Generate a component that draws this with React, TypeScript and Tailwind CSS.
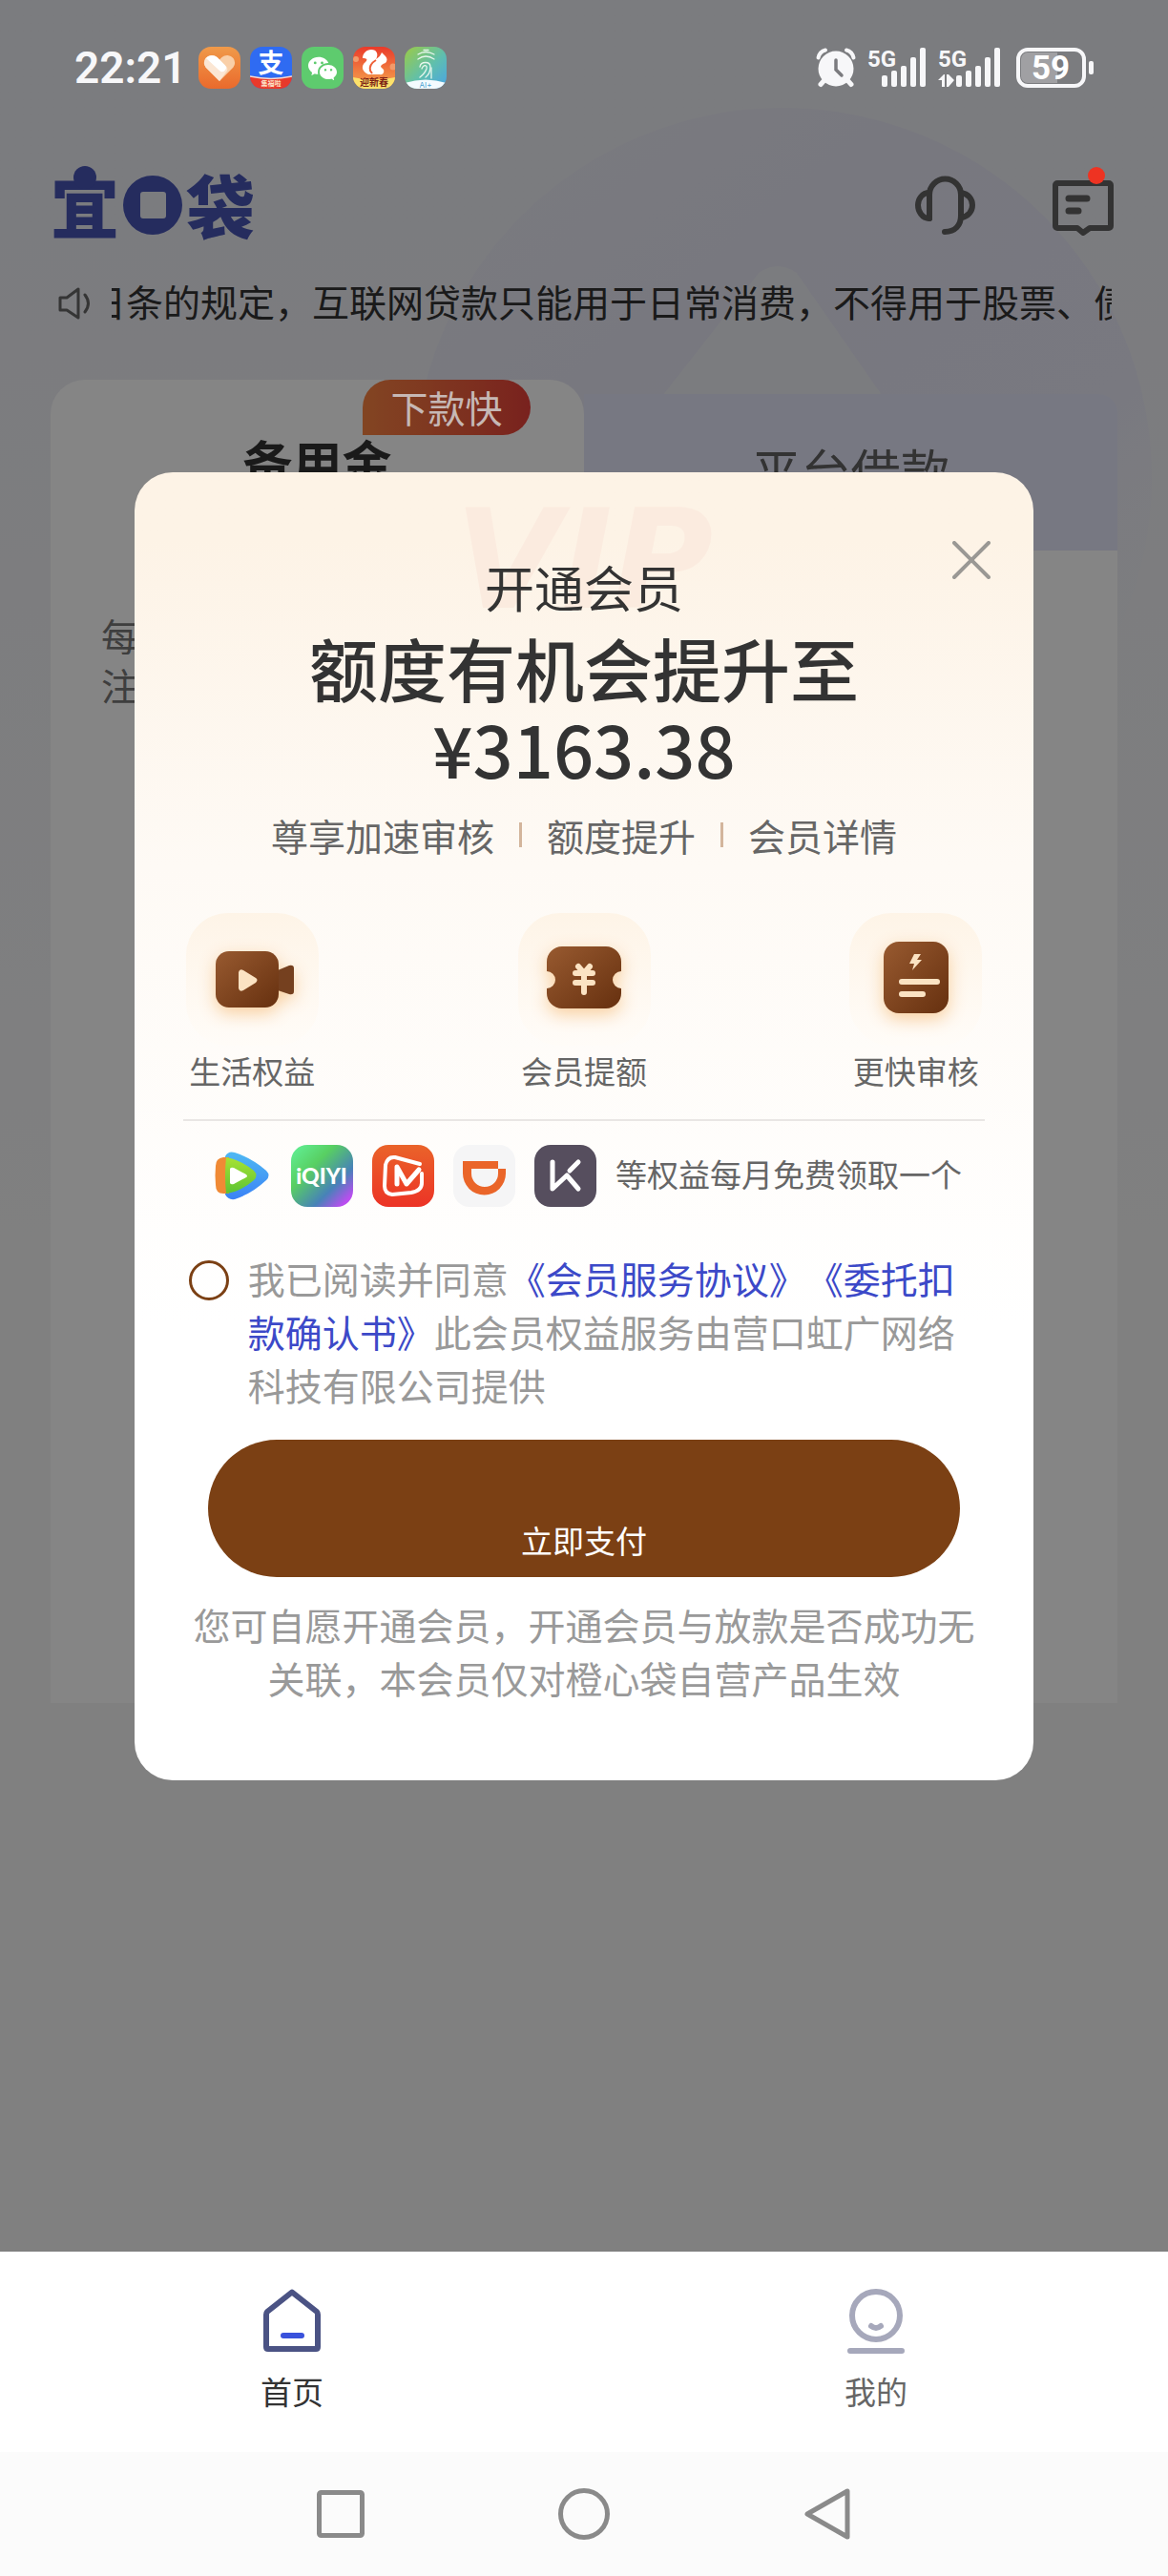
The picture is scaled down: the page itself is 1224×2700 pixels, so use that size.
import { useState } from 'react'
import type { ReactNode } from 'react'
import { BsWechat } from 'react-icons/bs'

const CJK = "'Noto Sans CJK SC', sans-serif"

function HeartApp() {
  return (
    <svg viewBox="0 0 44 44" className="size-11">
      <defs>
        <linearGradient id="heartBg" x1="0" y1="0" x2="0" y2="1">
          <stop offset="0" stopColor="#f09a4a" />
          <stop offset="1" stopColor="#ea6a2c" />
        </linearGradient>
      </defs>
      <rect width="44" height="44" rx="13" fill="url(#heartBg)" />
      <path d="M22 36 7.500 21.500a8.500 8.500 0 0 1 0-9.500 8.300 8.300 0 0 1 12-1L22 13.500l2.500-2.500a8.300 8.300 0 0 1 12 1 8.500 8.500 0 0 1 0 9.500Z" fill="#f9cfa8" />
      <path d="M22 36 7.500 21.500a8.500 8.500 0 0 1 0-9.500 8.300 8.300 0 0 1 12-1L29 20.500a4 4 0 0 1 0 6Z" fill="#fbe6d3" />
      <path d="M8 12a8.300 8.300 0 0 1 11.500-1l8 8a4 4 0 0 1-5.500 6Z" fill="#fff" />
    </svg>
  )
}

function PayApp() {
  return (
    <svg viewBox="0 0 44 44" className="size-11">
      <defs>
        <clipPath id="payClip"><rect width="44" height="44" rx="13" /></clipPath>
      </defs>
      <g clipPath="url(#payClip)">
        <rect width="44" height="44" fill="#2f6bf2" />
        <text x="22" y="27" fontSize="27" fontWeight="700" fill="#fff" textAnchor="middle" fontFamily={CJK}>支</text>
        <path d="M0 31q22 5 44 0v13H0Z" fill="#e8392b" />
        <path d="M0 31q22 5 44 0" fill="none" stroke="#fbd9cf" strokeWidth="1.500" />
        <text x="22" y="41" fontSize="7" fontWeight="700" fill="#fde3c8" textAnchor="middle" fontFamily={CJK}>集福啦</text>
      </g>
    </svg>
  )
}

function ChatApp() {
  return (
    <span className="flex size-11 items-center justify-center rounded-[13px] bg-[#5ecb6e] text-white">
      <BsWechat className="size-[30px]" />
    </span>
  )
}

function SquirrelApp() {
  return (
    <svg viewBox="0 0 44 44" className="size-11">
      <defs>
        <clipPath id="sqClip"><rect width="44" height="44" rx="13" /></clipPath>
        <linearGradient id="sqBg" x1="0" y1="0" x2="0" y2="1">
          <stop offset="0" stopColor="#ea3a2a" />
          <stop offset="0.700" stopColor="#f28a45" />
        </linearGradient>
      </defs>
      <g clipPath="url(#sqClip)">
        <rect width="44" height="44" fill="url(#sqBg)" />
        <circle cx="3" cy="13" r="3" fill="#f39a6a" />
        <circle cx="42" cy="21" r="3.500" fill="#f39a6a" />
        <path d="M16 29C9 26 8 20 13 16c3-3 1-4-3-4 0-5 4-9 9-9 6 0 8 5 5 10 3-2 5-4 6-7l4 4c2 2 2 5 0 7-3 1-5 2-5 4l3 3c1 3-1 6-4 5Z" fill="#fff" />
        <path d="M24 14c-5 3-7 7-6 11l2 3" fill="none" stroke="#ee6038" strokeWidth="2" />
        <path d="M0 32q22 5 44 0v12H0Z" fill="#fbe26b" />
        <text x="22" y="41" fontSize="10" fontWeight="700" fill="#7c1f14" textAnchor="middle" fontFamily={CJK}>迎新春</text>
      </g>
    </svg>
  )
}

function PrintApp() {
  return (
    <svg viewBox="0 0 44 44" className="size-11">
      <defs>
        <clipPath id="aiClip"><rect width="44" height="44" rx="13" /></clipPath>
        <linearGradient id="aiBg" x1="0" y1="0" x2="1" y2="1">
          <stop offset="0" stopColor="#9ccb45" />
          <stop offset="0.550" stopColor="#5fbfae" />
          <stop offset="1" stopColor="#4aa3e6" />
        </linearGradient>
      </defs>
      <g clipPath="url(#aiClip)">
        <rect width="44" height="44" fill="url(#aiBg)" />
        <g fill="none" stroke="#e6f6ec" strokeWidth="1.300" strokeLinecap="round">
          <path d="M20 3.500h5M14 8q8-5 17 0M14 13q8-6 17 0M16 21c1-6 11-6 11 0 0 4-1 8-5 11" />
          <path d="M18 23c2-5 6-4 5 0-1 3-3 6-7 9M28 22v11" />
        </g>
        <path d="M0 38q22-7 44 0v6H0Z" fill="#f4fbff" />
        <text x="22" y="43" fontSize="8" fill="#4a9fd0" textAnchor="middle" fontFamily="Inter, sans-serif">AI+</text>
      </g>
    </svg>
  )
}

function AlarmIcon() {
  return (
    <svg viewBox="0 0 42 42" className="size-[42px]">
      <g stroke="#f7f7f9" strokeLinecap="round" fill="none">
        <path d="M2.500 10.500Q4 4 10 2.500M39.500 10.500Q38 4 32 2.500" strokeWidth="4" />
        <path d="m9 34-4 4.500M33 34l4 4.500" strokeWidth="5" />
      </g>
      <circle cx="21" cy="22" r="18.500" fill="#f7f7f9" />
      <path d="M21 13v10l6 6" fill="none" stroke="#7b7b7f" strokeWidth="3.500" strokeLinecap="round" />
    </svg>
  )
}

function SignalIcon({ data }: { data?: boolean }) {
  return (
    <svg viewBox="0 0 66 42" className="h-[42px] w-[66px] overflow-visible" fill="#f7f7f9">
      <text x="0" y="20" fontSize="24" fontWeight="700" fontFamily="Roboto, sans-serif">5G</text>
      <g className={data ? 'translate-x-[4px]' : undefined}>
        <rect x="15" y="29" width="6" height="12" rx="2" />
        <rect x="25" y="24" width="6" height="17" rx="2" />
        <rect x="35" y="19" width="6" height="22" rx="2" />
        <rect x="45" y="10" width="6" height="31" rx="2" />
        <rect x="55" y="0" width="6" height="41" rx="2" />
      </g>
      {data ? <path d="M0 34 6 28h1v13H4v-7ZM9 28h2l6 6-6 7H9Z" /> : null}
    </svg>
  )
}

function BatteryIcon() {
  return (
    <svg viewBox="0 0 82 42" className="h-[42px] w-[82px]">
      <rect x="2" y="2" width="69" height="38" rx="10" fill="none" stroke="#f7f7f9" strokeWidth="4" />
      <path d="M12 5h31v32H12a7 7 0 0 1-7-7V12a7 7 0 0 1 7-7Z" fill="#a0a0a3" />
      <rect x="76" y="14" width="5" height="14" rx="2" fill="#f7f7f9" />
      <text x="36" y="33" fontSize="35" fontWeight="700" fill="#fff" textAnchor="middle" fontFamily="Roboto, sans-serif">59</text>
    </svg>
  )
}

function StatusBar() {
  return (
    <div className="relative z-20 flex items-center justify-between pt-[49px] pr-[77px] pl-[78px]">
      <div className="flex h-11 items-center gap-[10px]">
        <span className="mr-[2px] font-['Roboto',sans-serif] text-[46px] font-semibold text-[#f7f7f9]">22:21</span>
        <HeartApp />
        <PayApp />
        <ChatApp />
        <SquirrelApp />
        <PrintApp />
      </div>
      <div className="flex items-center gap-3">
        <AlarmIcon />
        <div className="mr-1 flex gap-2">
          <SignalIcon />
          <SignalIcon data />
        </div>
        <BatteryIcon />
      </div>
    </div>
  )
}

function Brand() {
  return (
    <h1 className="flex items-center gap-1 text-[72px] leading-[78px] font-black text-[#4755b5]">
      <span className="relative pb-1">
        宜
        <i className="absolute top-0 left-6 size-6 rounded-full bg-[#4755b5]" />
      </span>
      <svg viewBox="0 0 62 62" className="size-[62px]" role="img" aria-label="口">
        <path fillRule="evenodd" fill="#4755b5" d="M31 0a31 31 0 1 1 0 62 31 31 0 0 1 0-62ZM21 17a3 3 0 0 0-3 3v22a3 3 0 0 0 3 3h21a3 3 0 0 0 3-3V20a3 3 0 0 0-3-3Z" />
      </svg>
      <span className="pb-1">袋</span>
    </h1>
  )
}

function Header() {
  return (
    <header className="mt-[83px] flex h-[78px] items-center justify-between pr-[56px] pl-[53px]">
      <Brand />
      <div className="flex items-center gap-20">
        <button type="button" aria-label="客服">
          <svg viewBox="0 0 64 64" className="size-16" fill="none" stroke="#626262" strokeWidth="6" strokeLinecap="round" strokeLinejoin="round">
            <path d="M16 46V21a16 16 0 0 1 33 0v22c0 10-6 17-17 17" />
            <path d="M16 19C8 19 4 26 4 32s4 14 12 14M49 19c8 1 12 7 12 13s-4 12-12 13" />
          </svg>
        </button>
        <button type="button" aria-label="消息" className="relative">
          <svg viewBox="0 0 66 64" className="h-16 w-[66px]" fill="none" stroke="#626262" strokeWidth="6" strokeLinecap="round" strokeLinejoin="round">
            <path d="M6 9h54a2 2 0 0 1 2 2v43a2 2 0 0 1-2 2H40l-7 5-6-5H6a2 2 0 0 1-2-2V11a2 2 0 0 1 2-2Z" />
            <path d="M18 25h19M18 38h10" strokeWidth="7" />
          </svg>
          <span className="absolute -top-2 right-[10px] z-20 size-[18px] rounded-full bg-[#ee3322]" />
        </button>
      </div>
    </header>
  )
}

function Notice() {
  return (
    <div className="mt-[33px] flex items-center gap-[22px] pr-[59px] pl-[61px]">
      <svg viewBox="0 0 34 34" className="mt-[6px] size-[34px] shrink-0" fill="none" stroke="#666" strokeWidth="3" strokeLinejoin="round" strokeLinecap="round">
        <path d="M2 11h7l12-9v30L9 24H2Z" />
        <path d="M28 8q7 9 0 18" />
      </svg>
      <div className="min-w-0 flex-1 overflow-hidden">
        <p className="-ml-6 text-[39px] leading-[56px] whitespace-nowrap text-[#333]">
          日条的规定，互联网贷款只能用于日常消费，不得用于股票、债
        </p>
      </div>
    </div>
  )
}

function LoanCard() {
  return (
    <section className="mx-[53px] mt-[55px]">
      <div className="flex items-end text-[52px]">
        <button type="button" className="relative h-[179px] flex-1 rounded-t-[36px] bg-white pb-2 leading-[72px] font-bold text-[#333]">
          备用金
          <span className="absolute top-0 right-14 h-[58px] w-[176px] rounded-[29px] rounded-bl-none bg-linear-to-r from-[#fa8442] to-[#e8403a]" />
          <span className="absolute top-0 right-14 z-20 w-[176px] text-[39px] leading-[56px] font-normal text-[#c6b8b5]">下款快</span>
        </button>
        <button type="button" className="h-[164px] flex-1 rounded-tr-[20px] bg-[#e5e7fa] pb-1 leading-[72px] text-[#626262]">
          平台借款
        </button>
      </div>
      <div className="min-h-[1208px] bg-white px-[53px] pt-[62px] text-[39px] leading-[52px] text-[#777]">
        <p>每</p>
        <p>注</p>
      </div>
    </section>
  )
}

function Backdrop() {
  return (
    <svg viewBox="0 0 1224 1000" className="absolute top-0 left-0 w-full" aria-hidden="true">
      <defs>
        <linearGradient id="ring" x1="0" y1="0.100" x2="0.700" y2="1">
          <stop offset="0" stopColor="#e6e6f4" stopOpacity="0.200" />
          <stop offset="0.350" stopColor="#e6e6f4" />
          <stop offset="0.700" stopColor="#e8e8f6" />
          <stop offset="1" stopColor="#eeeff5" stopOpacity="0" />
        </linearGradient>
      </defs>
      <circle cx="820" cy="500" r="387" fill="url(#ring)" />
      <path d="M690 420 795 286q20-14 40 0l160 230H650Z" fill="#eeeff3" opacity="0.700" />
    </svg>
  )
}

function Brown({ id }: { id: string }) {
  return (
    <defs>
      <linearGradient id={id} x1="0" y1="0" x2="1" y2="1">
        <stop offset="0" stopColor="#985a30" />
        <stop offset="1" stopColor="#66300f" />
      </linearGradient>
    </defs>
  )
}

const perks: { label: string; icon: ReactNode }[] = [
  {
    label: '生活权益',
    icon: (
      <>
        <Brown id="camera" />
        <path d="m96 60 12-5q5-1 5 3v24q0 4-5 3l-12-4Z" fill="#75401f" />
        <rect x="31" y="40" width="66" height="59" rx="14" fill="url(#camera)" />
        <path d="M55 62v17q1 4 5 2l13-8q3-3 0-5l-13-8q-4-2-5 2Z" fill="#fbe3c3" />
      </>
    ),
  },
  {
    label: '会员提额',
    icon: (
      <>
        <Brown id="ticket" />
        <path d="M46 35h46a16 16 0 0 1 16 16v10a9 9 0 0 0 0 18v5a16 16 0 0 1-16 16H46a16 16 0 0 1-16-16v-5a9 9 0 0 0 0-18V51a16 16 0 0 1 16-16Z" fill="url(#ticket)" />
        <path d="m63 56 6 7 6-7M60 63h18M60 73h18M69 63v20" fill="none" stroke="#fbe3c3" strokeWidth="6" strokeLinecap="round" strokeLinejoin="round" />
      </>
    ),
  },
  {
    label: '更快审核',
    icon: (
      <>
        <Brown id="sheet" />
        <rect x="36" y="30" width="68" height="75" rx="16" fill="url(#sheet)" />
        <path d="m68 43-5 10h5l-2 7 10-11h-5l4-6Z" fill="#fbe3c3" />
        <path d="M55 72h37M55 85h22" stroke="#fbe3c3" strokeWidth="6" strokeLinecap="round" />
      </>
    ),
  },
]

function PartnerLogos() {
  return (
    <>
      <svg viewBox="0 0 65 65" className="size-[65px]" role="img" aria-label="腾讯视频">
        <defs>
          <linearGradient id="txBlue" x1="0" y1="0" x2="0" y2="1">
            <stop offset="0" stopColor="#4fb9f3" />
            <stop offset="1" stopColor="#3b82f6" />
          </linearGradient>
          <linearGradient id="txGreen" x1="0" y1="0" x2="0" y2="1">
            <stop offset="0" stopColor="#a8e234" />
            <stop offset="1" stopColor="#5cc433" />
          </linearGradient>
        </defs>
        <path d="M16 12q3-6 10-4 18 6 33 19 5 5 0 10-15 14-33 20-7 1-10-5Z" fill="url(#txBlue)" />
        <path d="M6 22q0-8 8-9h6v38h-6q-8 0-8-9-1-10 0-20Z" fill="#f08a35" />
        <path d="M17 13q16 3 29 14 5 5 0 10-14 12-29 14-2-19 0-38Z" fill="url(#txGreen)" />
        <path d="M21 25q1-2 4-1l13 7q2 2 0 3l-13 7q-3 1-4-1Z" fill="#fff" />
      </svg>
      <svg viewBox="0 0 65 65" className="size-[65px]">
        <defs>
          <linearGradient id="iqBg" x1="0" y1="0" x2="1" y2="1">
            <stop offset="0" stopColor="#62f29a" />
            <stop offset="0.350" stopColor="#58cf62" />
            <stop offset="0.680" stopColor="#4782b8" />
            <stop offset="0.900" stopColor="#bb4df0" />
          </linearGradient>
        </defs>
        <rect width="65" height="65" rx="17" fill="url(#iqBg)" />
        <text x="32" y="41" fontSize="23" fontWeight="900" fill="#fff" textAnchor="middle" fontFamily="Lato, sans-serif">iQIYI</text>
      </svg>
      <svg viewBox="0 0 65 65" className="size-[65px]" role="img" aria-label="芒果TV">
        <defs>
          <linearGradient id="mgBg" x1="0" y1="0" x2="0" y2="1">
            <stop offset="0" stopColor="#ea632a" />
            <stop offset="1" stopColor="#ec3326" />
          </linearGradient>
        </defs>
        <rect width="65" height="65" rx="17" fill="url(#mgBg)" />
        <g fill="none" stroke="#fff" strokeLinecap="round" strokeLinejoin="round">
          <path d="M50 20 24 13q-8-1-10 8l-1 22q0 8 8 9l20-2q11-2 11-10V30" strokeWidth="4" />
          <path d="M26 41V23l10 18 13-15" strokeWidth="5" />
        </g>
      </svg>
      <svg viewBox="0 0 65 65" className="size-[65px]" role="img" aria-label="滴滴">
        <rect width="65" height="65" rx="17" fill="#f5f5f6" />
        <path fillRule="evenodd" d="M10 17h37v8h8v5a22.500 22.500 0 0 1-45 0ZM19 25v5a14 14 0 0 0 28 0v-5Z" fill="#ea6529" />
      </svg>
      <svg viewBox="0 0 65 65" className="size-[65px]" role="img" aria-label="Keep">
        <rect width="65" height="65" rx="17" fill="#564e5e" />
        <path d="M19 18v28l15-14 12 14M37 27l9-9" fill="none" stroke="#fff" strokeWidth="5" strokeLinecap="round" strokeLinejoin="round" />
      </svg>
    </>
  )
}

function MemberDialog() {
  const [agreed, setAgreed] = useState(false)

  return (
    <div
      role="dialog"
      aria-label="开通会员"
      className="relative w-[77%] rounded-[40px] bg-white bg-linear-to-b from-[#fdf3e6] from-5% via-[#fefaf5] via-30% to-white to-65% px-[51px] pt-[90px] pb-20 text-center"
    >
      <span aria-hidden="true" className="absolute inset-x-0 top-[22px] font-['DejaVu_Sans',sans-serif] text-[144px] leading-[140px] font-bold text-[#fbebdf] italic">
        VIP
      </span>
      <button type="button" aria-label="关闭" className="absolute top-[72px] right-[45px]">
        <svg viewBox="0 0 40 40" className="size-10" stroke="#9a9894" strokeWidth="4" strokeLinecap="round">
          <path d="m2 2 36 36M38 2 2 38" />
        </svg>
      </button>

      <p className="relative text-[52px] leading-[60px] text-[#333]">开通会员</p>
      <h2 className="relative mt-[11px] text-[72px] leading-[85px] font-medium text-[#333]">
        额度有机会提升至
        <br />
        <span className="text-[74px]">¥3163.38</span>
      </h2>
      <div className="mt-5 flex items-center justify-center gap-[26px] text-[39px] leading-[56px] text-[#666]">
        <span>尊享加速审核</span>
        <i className="h-[26px] w-[3px] bg-[#d3b59c]" />
        <span>额度提升</span>
        <i className="h-[26px] w-[3px] bg-[#d3b59c]" />
        <span>会员详情</span>
      </div>

      <ul className="mt-[54px] flex justify-between px-[3px] text-[33px] leading-10 text-[#666]">
        {perks.map((perk) => (
          <li key={perk.label} className="flex flex-col items-center gap-[6px]">
            <span className="rounded-[44px] bg-linear-to-b from-[#fef4e7] to-[#fffcf8]">
              <svg viewBox="0 0 139 139" className="size-[139px] drop-shadow-[0_6px_9px_#f8cf9f]">{perk.icon}</svg>
            </span>
            {perk.label}
          </li>
        ))}
      </ul>

      <hr className="mt-[31px] border-t-2 border-[#e9e6e4]" />

      <div className="mt-[25px] flex items-center justify-center gap-5 pl-1">
        <PartnerLogos />
        <span className="pb-1 text-[33px] leading-10 text-[#666]">等权益每月免费领取一个</span>
      </div>

      <div className="mt-[46px] flex gap-5 pl-[6px] text-left text-[39px] leading-[56px] text-[#999]">
        <input
          id="agree"
          type="checkbox"
          checked={agreed}
          onChange={(e) => setAgreed(e.target.checked)}
          className="mt-[10px] size-[42px] shrink-0 appearance-none rounded-full border-[3px] border-[#7b4014] checked:bg-[#7b4014]"
        />
        <label htmlFor="agree" className="[text-spacing-trim:space-all]">
          我已阅读并同意
          <a href="#service" className="text-[#3c49c8]">《会员服务协议》</a>
          <a href="#deduct" className="text-[#3c49c8]">《委托扣款确认书》</a>
          此会员权益服务由营口虹广网络科技有限公司提供
        </label>
      </div>

      <div className="mt-[30px] px-[26px]">
        <button type="button" className="block w-full rounded-full bg-[#7b4014] pt-[85px] pb-[19px] text-[33px] leading-10 text-white">
          立即支付
        </button>
      </div>
      <p className="mt-[21px] text-[39px] leading-[56px] text-[#999]">
        您可自愿开通会员，开通会员与放款是否成功无关联，本会员仅对橙心袋自营产品生效
      </p>
    </div>
  )
}

function TabBar() {
  return (
    <nav className="flex bg-white pt-9 pb-11 text-[33px] leading-10">
      <a href="#home" className="flex flex-1 flex-col items-center gap-[18px] text-[#333]">
        <svg viewBox="0 0 70 72" className="h-[72px] w-[70px]" fill="none" strokeLinecap="round" strokeLinejoin="round">
          <path d="M35 6.500 61 27q1 1 1 3v34q0 2-2 2H10q-2 0-2-2V30q0-2 1-3Z" stroke="#4b5384" strokeWidth="6" />
          <path d="M26 52h19" stroke="#3a52dc" strokeWidth="6" />
        </svg>
        首页
      </a>
      <a href="#me" className="flex flex-1 flex-col items-center gap-[18px] text-[#666]">
        <svg viewBox="0 0 70 72" className="h-[72px] w-[70px]" fill="none" stroke="#a6a8bb" strokeWidth="6" strokeLinecap="round">
          <circle cx="35" cy="31" r="25" />
          <path d="M30 42q5 4 10 0M8 68h54" />
        </svg>
        我的
      </a>
    </nav>
  )
}

function SystemNav() {
  return (
    <div className="flex justify-center bg-[#fbfbfb] py-[35px]">
      <button type="button" aria-label="最近任务" className="flex w-[255px] justify-center">
        <svg viewBox="0 0 60 60" className="size-[60px]" fill="none" stroke="#8a8a8a" strokeWidth="5">
          <rect x="7.500" y="7.500" width="45" height="45" rx="2" />
        </svg>
      </button>
      <button type="button" aria-label="主屏幕" className="flex w-[255px] justify-center">
        <svg viewBox="0 0 60 60" className="size-[60px]" fill="none" stroke="#8a8a8a" strokeWidth="5">
          <circle cx="30" cy="30" r="24.500" />
        </svg>
      </button>
      <button type="button" aria-label="返回" className="flex w-[255px] justify-center">
        <svg viewBox="0 0 60 60" className="size-[60px]" fill="none" stroke="#8a8a8a" strokeWidth="5" strokeLinejoin="round">
          <path d="M51 6v48L9 30Z" />
        </svg>
      </button>
    </div>
  )
}

export default function App() {
  return (
    <div className="flex min-h-screen flex-col font-['Noto_Sans_CJK_SC',sans-serif]">
      <main className="relative flex-1 overflow-hidden bg-linear-to-b from-[#ecedf3] from-10% to-[#f6f6f6] to-60% pb-20">
        <Backdrop />
        <StatusBar />
        <div className="relative">
          <Header />
          <Notice />
          <LoanCard />
        </div>
        <div className="absolute inset-0 z-10 bg-black/48" />
        <div className="absolute inset-0 z-30 flex items-center justify-center">
          <MemberDialog />
        </div>
      </main>
      <TabBar />
      <SystemNav />
    </div>
  )
}
